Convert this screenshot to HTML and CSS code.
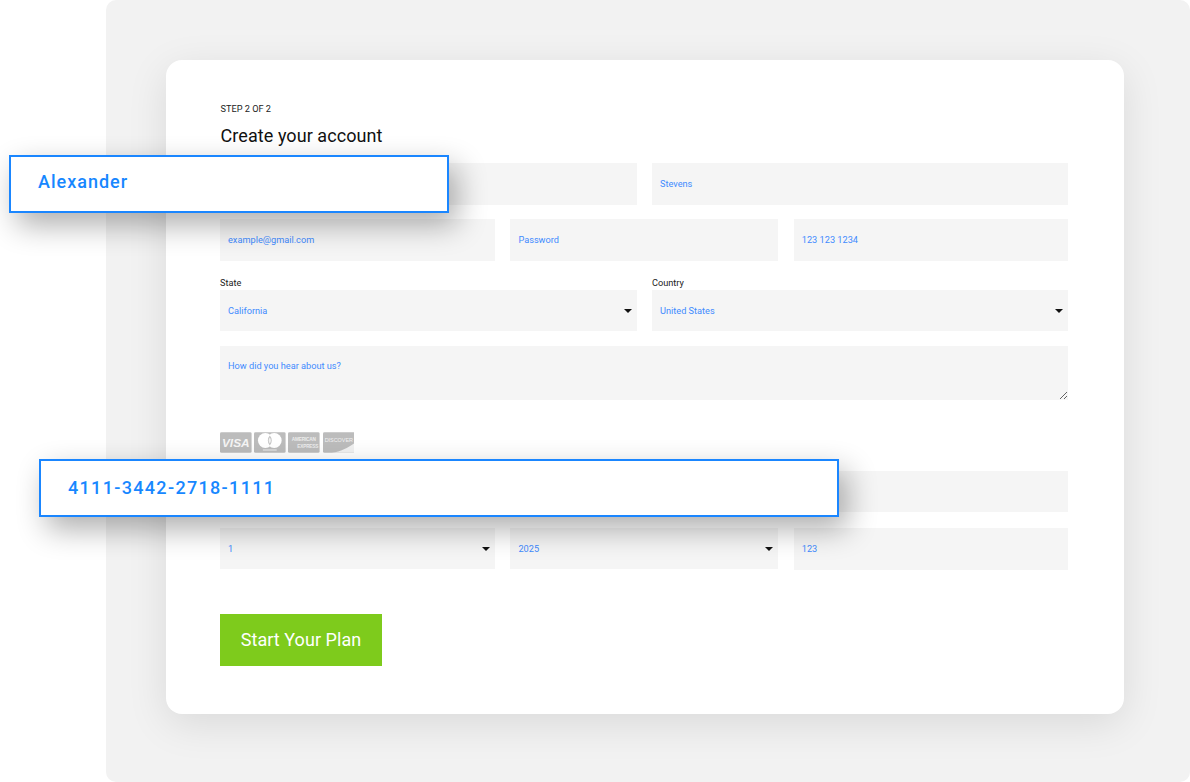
FILE: index.html
```html
<!DOCTYPE html>
<html lang="en">
<head>
<meta charset="utf-8">
<title>Create your account</title>
<link rel="stylesheet" href="styles.css">
</head>
<body>
<div class="stage">
  <main class="panel">
    <section class="card">
      <p class="step">STEP 2 OF 2</p>
      <h1 class="title">Create your account</h1>
      <form class="form">
        <div class="row two">
          <input class="field" type="text" aria-label="First name">
          <input class="field" type="text" value="Stevens" aria-label="Last name">
        </div>
        <div class="row three">
          <input class="field" type="text" placeholder="example@gmail.com" aria-label="Email">
          <input class="field" type="text" placeholder="Password" aria-label="Password">
          <input class="field" type="text" placeholder="123 123 1234" aria-label="Phone">
        </div>
        <div class="row two labelled">
          <label class="group"><span class="label">State</span>
            <span class="select-wrap"><select class="field select"><option>California</option></select></span>
          </label>
          <label class="group"><span class="label">Country</span>
            <span class="select-wrap"><select class="field select"><option>United States</option></select></span>
          </label>
        </div>
        <textarea class="field area" placeholder="How did you hear about us?" aria-label="How did you hear about us?"></textarea>
        <div class="cards">
          <svg class="pay" viewBox="0 0 32 21"><rect width="32" height="21" rx="1.5" fill="#bcbcbc"/><text x="16" y="15" text-anchor="middle" class="visa">VISA</text></svg>
          <svg class="pay" viewBox="0 0 32 21"><rect width="32" height="21" rx="1.5" fill="#bcbcbc"/><circle cx="11.500" cy="8.500" r="7.500" fill="#fff"/><circle cx="20.500" cy="8.500" r="7.500" fill="#fff"/><path d="M16 3.400a7.500 7.500 0 0 1 0 10.200a7.500 7.500 0 0 1 0-10.200z" fill="#c4c4c4"/><path d="M16 5.500a5 5 0 0 1 0 6a5 5 0 0 1 0-6z" fill="#f2f2f2"/><rect x="9" y="17.500" width="14" height="1.200" fill="#e8e8e8"/></svg>
          <svg class="pay" viewBox="0 0 32 21"><rect width="32" height="21" rx="1.500" fill="#bcbcbc"/><text x="16" y="9" text-anchor="middle" class="amex">AMERICAN</text><text x="20" y="16" text-anchor="middle" class="amex">EXPRESS</text></svg>
          <svg class="pay" viewBox="0 0 32 21"><rect width="32" height="21" rx="1.500" fill="#bcbcbc"/><path d="M32 11V19.500a1.500 1.500 0 0 1-1.500 1.500H9c9-1.500 17-5.500 23-10z" fill="#f1f1f1"/><text x="16" y="10" text-anchor="middle" class="disc">DISCOVER</text></svg>
        </div>
        <div class="row one card-row">
          <input class="field" type="text" aria-label="Card number">
        </div>
        <div class="row three">
          <span class="select-wrap"><select class="field select" aria-label="Month"><option>1</option></select></span>
          <span class="select-wrap"><select class="field select" aria-label="Year"><option>2025</option></select></span>
          <input class="field cvc" type="text" value="123" aria-label="CVC">
        </div>
        <button class="submit" type="button">Start Your Plan</button>
      </form>
    </section>
  </main>
  <div class="float float-name">Alexander</div>
  <div class="float float-card">4111-3442-2718-1111</div>
</div>
</body>
</html>
```

FILE: styles.css
```css
* { box-sizing: border-box; }
html, body { margin: 0; padding: 0; }
body {
  width: 1190px;
  height: 782px;
  overflow: hidden;
  background: #fff;
  font-family: Roboto, "Liberation Sans", sans-serif;
}
.stage { position: relative; width: 1190px; height: 782px; }
.panel {
  margin-left: 106px;
  width: 1084px;
  height: 782px;
  padding: 60px 0 0 60px;
  background: #f2f2f2;
  border-radius: 10px;
}
.card {
  width: 958px;
  height: 654px;
  padding: 43px 56px 0 54px;
  background: #fff;
  border-radius: 16px;
  box-shadow: 0 10px 40px rgba(0, 0, 0, 0.1);
}
.step {
  margin: 0;
  padding-left: 0.500px;
  font-size: 9.200px;
  line-height: 12px;
  color: #222;
}
.title {
  margin: 9px 0 0;
  padding-left: 0.600px;
  font-size: 18px;
  line-height: 23px;
  font-weight: 400;
  letter-spacing: 0.060px;
  color: #111;
}
.form { display: flex; flex-direction: column; margin-top: 16px; }
.row { display: grid; }
.two { grid-template-columns: 417px 416px; column-gap: 15px; }
.three { grid-template-columns: 275px 268px 274.200px; column-gap: 15.400px; }
.one { grid-template-columns: 1fr; }
.row + .row { margin-top: 14px; }
.row.labelled { margin-top: 16px; }
.row.card-row { margin-top: 18px; }
.row.card-row + .row { margin-top: 16px; }
.field {
  display: block;
  width: 100%;
  height: 42px;
  padding: 0 8px 1px;
  border: 0;
  border-radius: 0;
  outline: 0;
  background: #f5f5f5;
  color: #3f8bff;
  font-family: Roboto, "Liberation Sans", sans-serif;
  font-size: 9.200px;
}
.field::placeholder { color: #3f8bff; opacity: 1; }
.label {
  display: block;
  height: 13px;
  font-size: 9.200px;
  line-height: 12px;
  color: #222;
}
.group { display: block; }
.select-wrap { display: block; position: relative; }
.select {
  height: 41px;
  padding-left: 8px;
  appearance: none;
  -webkit-appearance: none;
}
.select-wrap::after {
  content: "";
  position: absolute;
  right: 5px;
  top: 50%;
  margin-top: -2px;
  border-left: 4.500px solid transparent;
  border-right: 4.500px solid transparent;
  border-top: 4.500px solid #111;
}
.area {
  height: 54px;
  margin-top: 15px;
  padding: 14px 8px 0;
  line-height: 12px;
}
.cards { display: flex; gap: 2.600px; margin-top: 32px; height: 21px; }
.pay { display: block; width: 31.600px; height: 21px; }
.visa { font: italic 700 12px "Liberation Sans", sans-serif; fill: #f5f5f5; }
.amex { font: 700 4.800px "Liberation Sans", sans-serif; fill: #ececec; letter-spacing: -0.200px; }
.disc { font: 400 5.500px "Liberation Sans", sans-serif; fill: #f1f1f1; }
.card-row .field { height: 41px; }
.submit {
  width: 162px;
  height: 52px;
  margin-top: 44px;
  padding: 0 0 2px;
  border: 0;
  background: #7ecb1c;
  color: #fff;
  font-family: Roboto, "Liberation Sans", sans-serif;
  font-size: 18px;
  font-weight: 400;
  letter-spacing: 0.050px;
}
.float {
  position: absolute;
  height: 58px;
  padding-left: 27px;
  background: #fff;
  border: 2px solid #1a86ff;
  color: #1787ff;
  font-size: 18px;
  font-weight: 500;
  line-height: 50px;
  letter-spacing: 1px;
  box-shadow: 8px 12px 30px rgba(0, 0, 0, 0.32);
}
.float-name { left: 9px; top: 155px; width: 440px; }
.float-card { left: 39px; top: 459px; width: 800px; line-height: 54px; letter-spacing: 1.330px; }
```
